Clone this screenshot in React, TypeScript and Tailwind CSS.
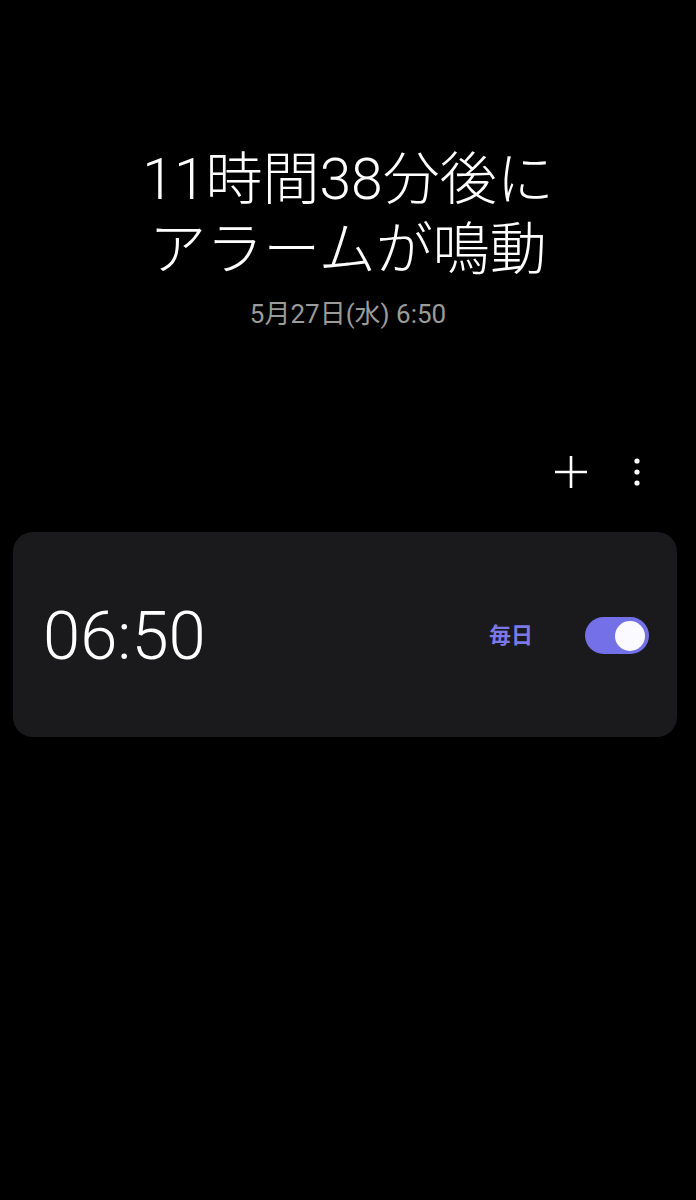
import React from "react";

export default function App() {
  const jp = { fontFamily: "Roboto, 'Noto Sans CJK JP', sans-serif" };
  return (
    <div className="w-[696px] h-[1200px] bg-black text-white" style={jp}>
      <div className="flex flex-col items-center pt-[145px]">
        <div className="text-[57px] leading-[70px] text-center text-white font-light">
          <div>11時間38分後に</div>
          <div>アラームが鳴動</div>
        </div>
        <div className="mt-[12px] text-[26px] leading-[34px] text-[#9b9b9b]">5月27日(水) 6:50</div>
      </div>
      <div className="flex justify-end items-center gap-[45px] pr-[55px] mt-[116px] h-[50px]">
        <svg width="34" height="34" viewBox="0 0 34 34">
          <path d="M17 1 V33 M1 17 H33" stroke="white" strokeWidth="2.6" />
        </svg>
        <svg width="8" height="30" viewBox="0 0 8 30">
          <circle cx="4" cy="4" r="2.6" fill="white" />
          <circle cx="4" cy="15" r="2.6" fill="white" />
          <circle cx="4" cy="26" r="2.6" fill="white" />
        </svg>
      </div>
      <div className="ml-[13px] w-[664px] mt-[35px] h-[205px] rounded-[20px] bg-[#1a1a1c] flex items-center pl-[30px] pr-[28px]">
        <div className="text-[67px] leading-none text-white pt-[4px] font-light" style={{ fontFamily: "Roboto, sans-serif" }}>06:50</div>
        <div className="flex-1" />
        <div className="text-[22px] font-bold text-[#7b79e8] mr-[52px] pt-[2px]">毎日</div>
        <div className="w-[64px] h-[37px] rounded-full bg-[#7471e8] flex items-center justify-end pr-[4px] mt-[2px]">
          <div className="w-[30px] h-[30px] rounded-full bg-[#fbfbff]" />
        </div>
      </div>
    </div>
  );
}
